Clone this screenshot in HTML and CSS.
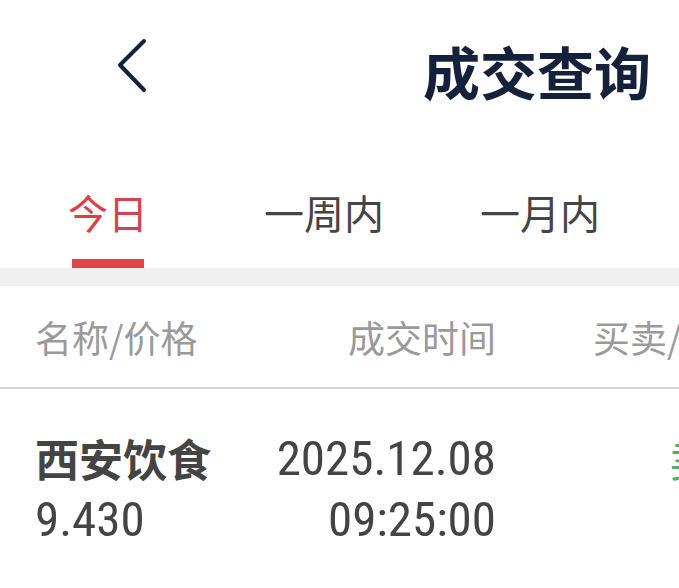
FILE: index.html
```html
<!DOCTYPE html>
<html lang="zh-CN">
<head>
  <meta charset="UTF-8">
  <meta name="viewport" content="width=device-width, initial-scale=1.0">
  <link rel="stylesheet" href="styles.css">
  <title>成交查询</title>
</head>
<body>
  <div class="page">
    <div class="nav">
      <a class="back" href="#">
        <svg width="34" height="58" viewBox="0 0 34 58">
          <polyline points="27,4 3,28 27,53" fill="none" stroke="#15203a" stroke-width="4" stroke-linecap="round" stroke-linejoin="round"/>
        </svg>
      </a>
      <h1 class="title">成交查询</h1>
    </div>

    <div class="tabs">
      <div class="tab active">今日<span class="bar"></span></div>
      <div class="tab">一周内</div>
      <div class="tab">一月内</div>
    </div>

    <div class="band"></div>

    <div class="row head">
      <div class="c1">名称/价格</div>
      <div class="c2">成交时间</div>
      <div class="c3">买卖/状态</div>
    </div>

    <div class="row item">
      <div class="c1">
        <div class="name">西安饮食</div>
        <div class="num">9.430</div>
      </div>
      <div class="c2">
        <div class="num">2025.12.08</div>
        <div class="num">09:25:00</div>
      </div>
      <div class="c3">
        <div class="sell">卖出</div>
      </div>
    </div>
  </div>
</body>
</html>
```

FILE: styles.css
```css
body {
  margin: 0;
  padding: 0;
  background-color: #fff;
  font-family: "Noto Sans CJK SC", "Noto Sans", sans-serif;
  overflow: hidden;
}

.page {
  width: 679px;
  overflow: hidden;
}

.nav {
  height: 140px;
  display: flex;
  align-items: center;
  justify-content: space-between;
  padding: 0 28px 0 117px;
}

.back {
  display: flex;
  margin-top: -8px;
}

.title {
  margin: 0;
  font-size: 57px;
  font-weight: 700;
  line-height: 1;
  color: #15203a;
}

.tabs {
  display: flex;
  padding-top: 52px;
}

.tab {
  width: 216px;
  flex: none;
  display: flex;
  flex-direction: column;
  align-items: center;
  font-size: 40px;
  line-height: 40px;
  color: #454545;
  padding-bottom: 36px;
}

.tab.active {
  color: #d84146;
  padding-bottom: 0;
}

.tab .bar {
  display: block;
  width: 72px;
  height: 9px;
  margin-top: 27px;
  background-color: #e04448;
}

.band {
  height: 18px;
  background-color: #efefef;
}

.row {
  display: grid;
  grid-template-columns: 200px 261px 260px;
  padding-left: 35px;
}

.head {
  padding-top: 33px;
  padding-bottom: 32px;
  font-size: 37px;
  line-height: 36px;
  color: #9a9a9a;
  border-bottom: 2px solid #d4d4d4;
}

.c2 {
  text-align: right;
}

.c3 {
  padding-left: 97px;
  white-space: nowrap;
}

.item {
  padding-top: 39px;
  line-height: 61px;
  color: #444;
}

.item .c3 {
  padding-left: 173px;
}

.name {
  font-size: 44px;
  font-weight: 700;
}

.num {
  font-family: "Liberation Sans Narrow", "Roboto Condensed", "DejaVu Sans Condensed", sans-serif;
  font-size: 49px;
}

.sell {
  font-size: 44px;
  color: #4caf6e;
}
```
